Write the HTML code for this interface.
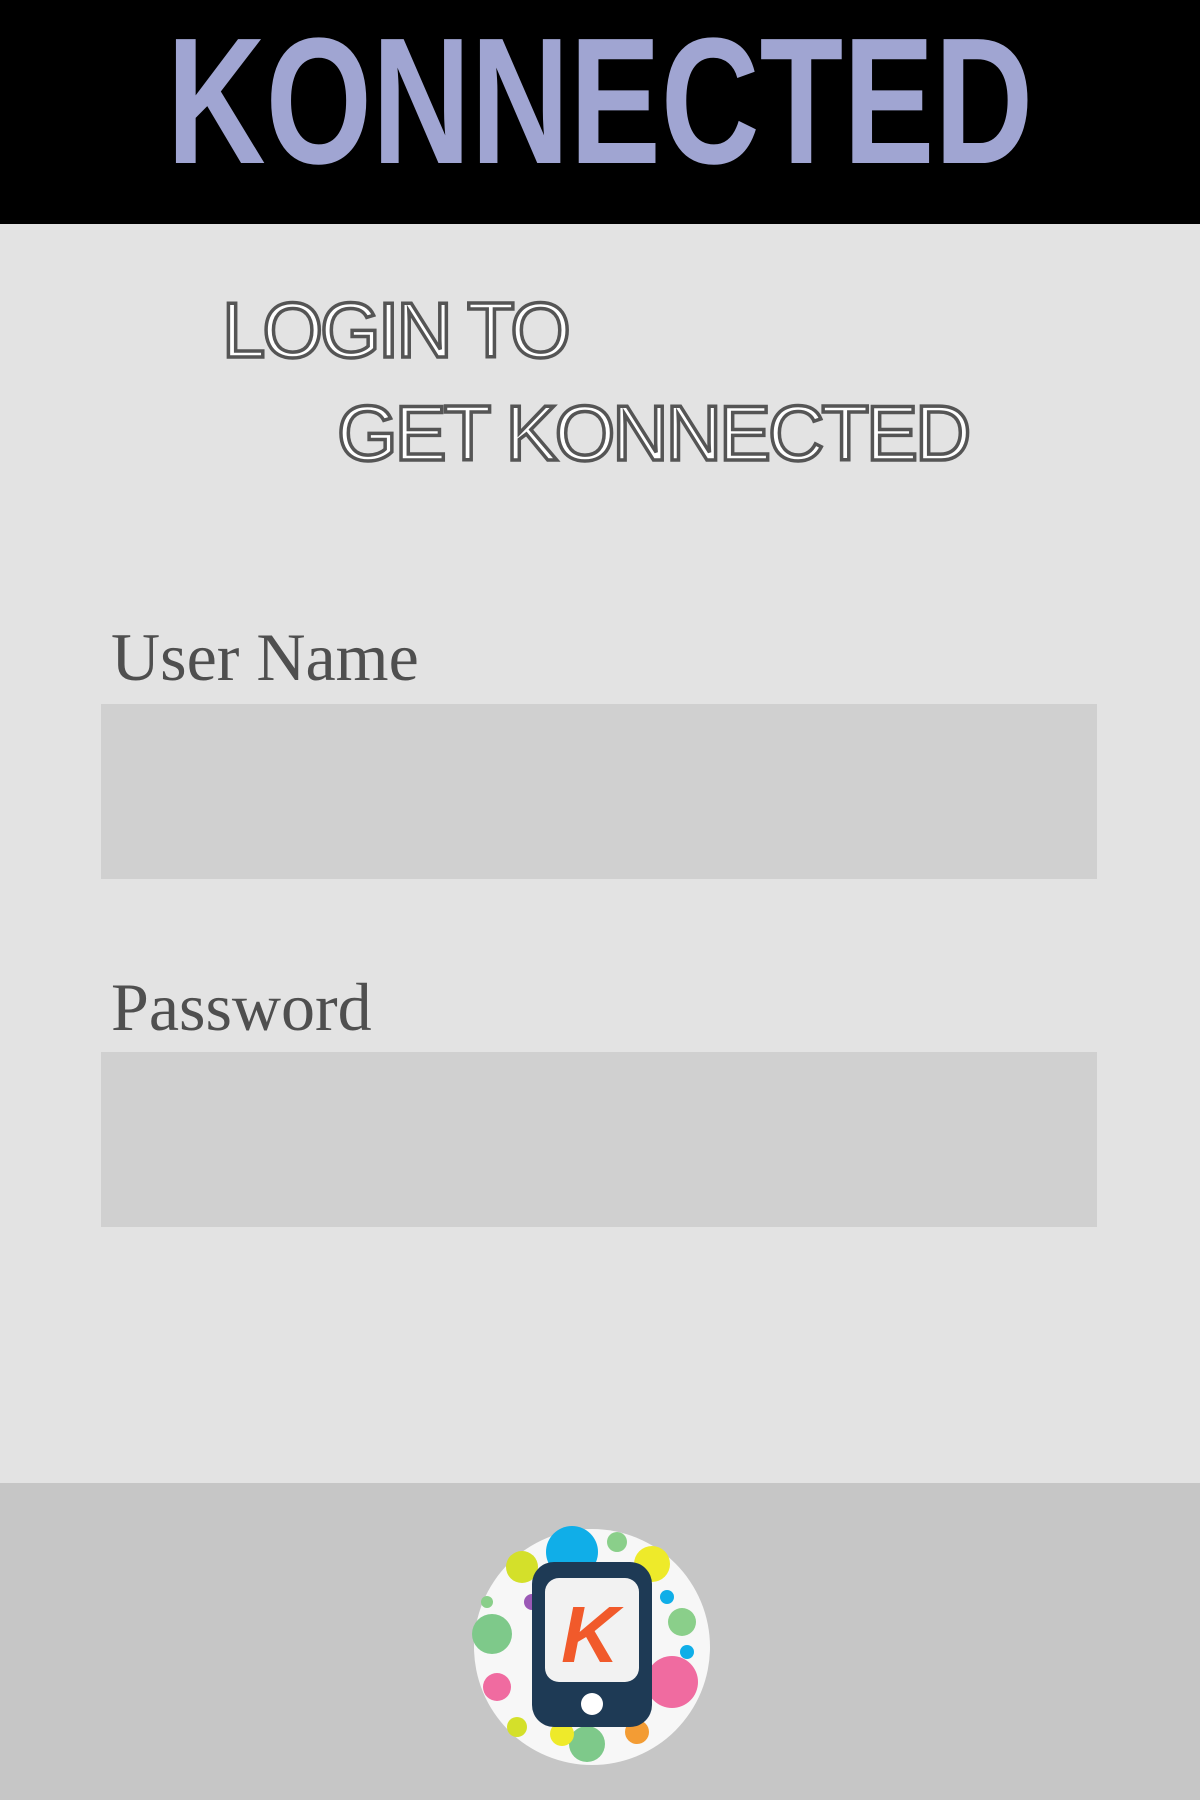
<!DOCTYPE html>
<html><head><meta charset="utf-8"><style>
body{margin:0;width:1200px;height:1800px;background:#e3e3e3;position:relative;overflow:hidden;font-family:"Liberation Serif",serif}
.hdr{position:absolute;left:0;top:0;width:1200px;height:224px;background:#000;overflow:hidden}
.title{position:absolute;left:0;top:12px;width:1200px;text-align:center;font-family:"Liberation Sans",sans-serif;font-weight:bold;font-size:180px;line-height:180px;color:#a0a5d2;transform:scaleX(0.76);transform-origin:center;white-space:nowrap}
.lg{position:absolute;font-family:"Liberation Sans",sans-serif;font-size:78px;color:#fff;-webkit-text-stroke:3.5px #555;letter-spacing:-3px;white-space:nowrap}
.lbl{position:absolute;left:111px;font-size:68px;color:#4f4f4f}
.inp{position:absolute;left:101px;width:996px;height:175px;background:#d0d0d0}
.ftr{position:absolute;left:0;top:1483px;width:1200px;height:317px;background:#c6c6c6}
</style></head><body>
<div class="hdr"><div class="title">KONNECTED</div></div>
<div class="lg" style="left:222px;top:285px">LOGIN TO</div>
<div class="lg" style="left:337px;top:388px">GET KONNECTED</div>
<div class="lbl" style="top:618px">User Name</div>
<div class="inp" style="top:704px"></div>
<div class="lbl" style="top:968px">Password</div>
<div class="inp" style="top:1052px"></div>
<div class="ftr"></div>
<svg width="260" height="250" style="position:absolute;left:462px;top:1522px" viewBox="0 0 260 250">
<circle cx="130" cy="125" r="118" fill="#fff" opacity=".85"/>
<circle cx="110" cy="30" r="26" fill="#10aee8"/>
<circle cx="60" cy="45" r="16" fill="#d4e02a"/>
<circle cx="190" cy="42" r="18" fill="#eeea2a"/>
<circle cx="30" cy="112" r="20" fill="#7ec98a"/>
<circle cx="220" cy="100" r="14" fill="#8acf8a"/>
<circle cx="210" cy="160" r="26" fill="#f06ba0"/>
<circle cx="35" cy="165" r="14" fill="#f06ba0"/>
<circle cx="55" cy="205" r="10" fill="#d4e02a"/>
<circle cx="125" cy="222" r="18" fill="#7ec98a"/>
<circle cx="100" cy="212" r="12" fill="#eeea2a"/>
<circle cx="175" cy="210" r="12" fill="#f39c34"/>
<circle cx="70" cy="80" r="8" fill="#9b59b6"/>
<circle cx="205" cy="75" r="7" fill="#10aee8"/>
<circle cx="25" cy="80" r="6" fill="#8acf8a"/>
<circle cx="155" cy="20" r="10" fill="#8acf8a"/>
<circle cx="80" cy="190" r="8" fill="#9b59b6"/>
<circle cx="225" cy="130" r="7" fill="#10aee8"/>
<rect x="70" y="40" width="120" height="165" rx="22" fill="#1e3a55"/>
<rect x="83" y="56" width="94" height="104" rx="14" fill="#f2f2f2"/>
<circle cx="130" cy="182" r="11" fill="#fff"/>
<text x="128" y="140" text-anchor="middle" font-family="Liberation Sans,sans-serif" font-weight="bold" font-style="italic" font-size="80" fill="#f15a2b">K</text>
</svg>
</body></html>
